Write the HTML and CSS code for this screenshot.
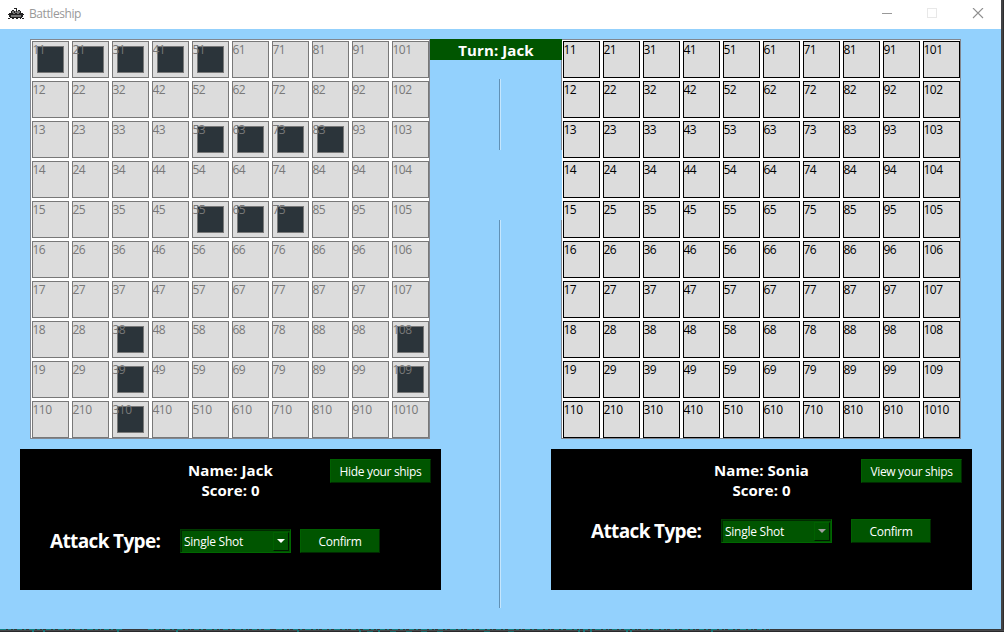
FILE: index.html
```html
<!DOCTYPE html>
<html lang="en">
<head>
<meta charset="utf-8">
<title>Battleship</title>
<link rel="stylesheet" href="styles.css">
</head>
<body>
<div class="desktop">
  <div class="window">
    <header class="titlebar">
      <svg class="app-icon" width="16" height="12" viewBox="0 0 16 12" shape-rendering="crispEdges">
        <path fill="#777" d="M4 3h8v3H4zM3 7h10v2H3z"/>
        <path fill="#222" d="M6 0h3v1H6zM4 2h2v1H4zM8 1h1v3H8zM10 2h2v1h-2zM3 3h1v2H3zM6 3h1v2H6zM12 3h1v2h-1zM1 5h4v1H1zM7 5h2v1H7zM11 5h4v1h-4zM0 6h16v1H0zM1 7h2v2H1zM13 7h2v2h-2zM2 9h12v1H2zM0 10h2v1H0zM4 10h2v1H4zM8 10h2v1H8zM12 10h1v1h-1zM14 10h2v1h-2z"/>
      </svg>
      <span class="caption">Battleship</span>
      <svg class="controls" width="106" height="12" viewBox="0 0 106 12">
        <path d="M0 5.500h10" stroke="#999"/>
        <rect x="45.500" y=".500" width="9" height="9" fill="none" stroke="#e8e8e8"/>
        <path d="M91 0l10 10M101 0l-10 10" stroke="#8f8f8f" stroke-width="1.100"/>
      </svg>
    </header>
    <main class="scene">
      <section class="boards">
        <div class="board disabled" data-ships="11 21 31 41 51 53 63 73 83 55 65 75 38 39 310 108 109"></div>
        <div class="center">
          <div class="turn"><span>Turn: Jack</span></div>
          <div class="rule upper"></div>
          <div class="message"></div>
          <div class="rule lower"></div>
        </div>
        <div class="board" data-ships=""></div>
      </section>
      <section class="players">
        <div class="panel">
          <div class="info"><div class="name">Name: Jack</div><div class="score">Score: 0</div></div>
          <button class="btn ships">Hide your ships</button>
          <div class="attack first">
            <span class="attack-label">Attack Type:</span>
            <div class="combo"><span>Single Shot</span><i class="drop"><svg width="8" height="4" viewBox="0 0 8 4"><path d="M0 0h8L4 4z" fill="#fff"/></svg></i></div>
            <button class="btn confirm">Confirm</button>
          </div>
        </div>
        <div class="gutter"><div class="rule tail"></div></div>
        <div class="panel">
          <div class="info"><div class="name">Name: Sonia</div><div class="score">Score: 0</div></div>
          <button class="btn ships">View your ships</button>
          <div class="attack second">
            <span class="attack-label">Attack Type:</span>
            <div class="combo"><span>Single Shot</span><i class="drop"><svg width="8" height="4" viewBox="0 0 8 4"><path d="M0 0h8L4 4z" fill="#a0a0a0"/></svg></i></div>
            <button class="btn confirm">Confirm</button>
          </div>
        </div>
      </section>
    </main>
  </div>
  <svg class="backdrop" width="1004" height="3" viewBox="0 0 1004 3" shape-rendering="crispEdges">
    <path d="M0 .5h1004" stroke="#36383a"/>
    <path d="M0 1.500h1004" stroke="#48484a"/>
    <path d="M0 2.500h1004" stroke="#29292b"/>
    <path d="M0 .5h122M148 .5h122M276 .5h494" stroke="#147f82" stroke-dasharray="6 2 3 2 1 3 5 2 2 3"/>
    <path d="M32 2h2M43 2h2M117 2h2M176 2h2M297 2h2M359 2h2M378 2h2M578 2h2M583 2h2M590 2h2M626 2h2M630 2h2M711 2h2" stroke="#147477" stroke-width="2"/>
    <path d="M367 2.500h6M390 2.500h6M406 2.500h6M421 2.500h6M437 2.500h6M484 2.500h6M508 2.500h6" stroke="#126063"/>
  </svg>
</div>
<script src="board.js"></script>
</body>
</html>
```
FILE: styles.css
```css
* { box-sizing: border-box; }
body { margin: 0; font-family: "Open Sans", "Noto Sans", sans-serif; overflow: hidden; }
.desktop { width: 1004px; height: 632px; background: linear-gradient(#2d2d2e, #2d2d2e) right / 1px 100% no-repeat #424244; }
.window { width: 1001px; height: 629px; background: #93d1fd; }
.backdrop { display: block; }
.titlebar { display: flex; height: 29px; background: #fff; padding-left: 8px; }
.app-icon { margin-top: 8px; }
.caption { margin: 5px 0 0 5px; font-size: 12px; line-height: 17px; color: #999; letter-spacing: -.42px; white-space: nowrap; }
.controls { margin: 8px 13px 0 auto; }
.scene { padding-top: 10px; }
.boards { display: flex; padding-left: 30px; height: 400px; }
.board {
  display: grid; grid-template: repeat(10, 37px) / repeat(10, 37px); gap: 3px;
  width: 400px; height: 400px; padding: 1px 0 0 1px;
  border: 1px solid #828790; background: #fff;
}
.cell { display: grid; border: 1px solid #000; background: #dcdcdc; font-size: 12px; line-height: 15px; color: #000; letter-spacing: -.5px; white-space: nowrap; }
.cell > * { grid-area: 1 / 1; }
.cell .num { z-index: 1; margin-left: -.5px; }
.disabled .cell { border-color: #787878; }
.disabled .num { color: #787878; }
.ship { width: 27px; height: 27px; margin: 4px 0 0 4px; border: 1px solid #787878; background: #2b343a; }
.center { width: 131px; z-index: 1; }
.turn { width: 132px; height: 21px; background: #005500; color: #fff; text-align: center; font-size: 15px; font-weight: 700; line-height: 22px; letter-spacing: .1px; }
.rule { width: 2px; margin-left: 69px; border-left: 1px solid #6191b5; background: #c5e6fd; }
.upper { height: 71px; margin-top: 19px; }
.message { width: 132px; height: 70px; background: #93d1fd; }
.lower { height: 219px; }
.gutter { width: 110px; }
.tail { height: 169px; margin-left: 58px; }
.players { display: flex; padding-left: 20px; }
.panel { display: grid; grid-template: 70px 51px / 1fr; width: 421px; height: 141px; margin-top: 10px; padding: 10px; background: #000; color: #fff; }
.info { grid-area: 1 / 1; text-align: center; font-size: 15px; font-weight: 700; line-height: 20px; padding-top: 1px; letter-spacing: .07px; }
.btn {
  height: 24px; padding: 2px 0 0; font: 12px/20px "Open Sans", "Noto Sans", sans-serif; color: #fff; background: #005500;
  border: 1px solid; border-color: #006000 #002a00 #002a00 #006000; letter-spacing: -.33px; white-space: nowrap;
}
.ships { grid-area: 1 / 1; justify-self: end; width: 101px; }
.attack { display: flex; height: 24px; }
.first { padding-left: 20px; }
.second { padding-left: 30px; margin-top: -10px; }
.attack-label { width: 130px; font-size: 19px; font-weight: 700; line-height: 24px; letter-spacing: -.64px; white-space: nowrap; }
.combo {
  display: flex; width: 111px; height: 24px; padding: 1px 1px 1px 3px; background: #005500;
  border: 1px solid; border-color: #003a00 #006800 #006800 #003a00; box-shadow: inset 1px 1px #002a00;
  font-size: 12px; line-height: 22px; letter-spacing: -.25px; white-space: nowrap;
}
.drop { display: flex; align-items: center; justify-content: center; width: 16px; height: 19px; margin: 1px 0 0 auto; border: 1px solid; border-color: #006000 #001800 #001800 #006000; }
.drop svg { margin-top: -1px; }
.confirm { width: 80px; margin-left: 9px; }
.second .confirm { margin-left: 19px; }
```
FILE: board.js
```js
document.querySelectorAll('.board').forEach(function (board) {
  var ships = board.dataset.ships.split(' ');
  for (var row = 1; row <= 10; row++) {
    for (var col = 1; col <= 10; col++) {
      var id = '' + col + row;
      var cell = document.createElement('div');
      cell.className = 'cell';
      if (ships.includes(id)) {
        var ship = document.createElement('i');
        ship.className = 'ship';
        cell.appendChild(ship);
      }
      var num = document.createElement('span');
      num.className = 'num';
      num.textContent = id;
      cell.appendChild(num);
      board.appendChild(cell);
    }
  }
});
```
